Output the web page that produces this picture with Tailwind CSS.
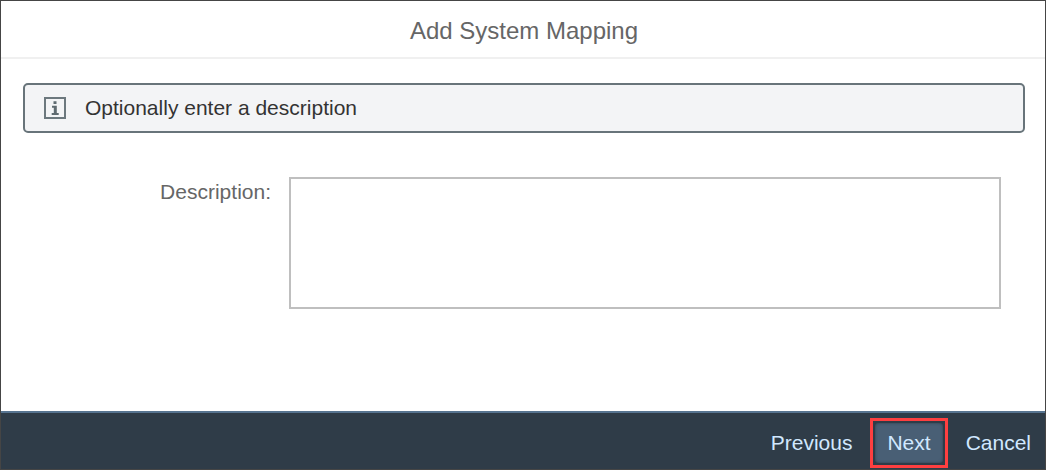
<!DOCTYPE html>
<html lang="en">
<head>
<meta charset="utf-8">
<meta name="viewport" content="width=device-width, initial-scale=1">
<title>Add System Mapping</title>
<script src="https://cdn.jsdelivr.net/npm/@tailwindcss/browser@4"></script>
</head>
<body class="flex min-h-screen flex-col border border-[#454545] bg-white font-['Liberation_Sans',Arial,sans-serif] text-[21px] leading-6 text-[#666666]">
  <header class="border-b-2 border-[#f0f0f0] pt-[14px] pb-[10px] pl-[2px] text-center">
    <h1 class="text-[24px] leading-8">Add System Mapping</h1>
  </header>
  <main class="flex grow flex-col pt-6 pr-5 pb-10 pl-[22px]">
    <div role="note" class="flex items-center gap-[19px] rounded-[5px] border-2 border-[#68747a] bg-[#f3f4f6] px-[19px] py-[11px] text-[#333333]">
      <svg class="size-[22px] shrink-0" viewBox="0 0 22 22" fill="none" aria-hidden="true">
        <rect x="1" y="1" width="20" height="20" stroke="#6c787e" stroke-width="2"/>
        <path d="M9.500 4.300h3v2.600h-3zM8 8.800h4.800v7.200h1.900v2H7.700v-2h2.100v-5.300H8z" fill="#5f6b71"/>
      </svg>
      <p>Optionally enter a description</p>
    </div>
    <div class="mt-11 mr-6 flex items-start">
      <label for="description" class="w-[248px] shrink-0 pt-[3px] text-right">Description:</label>
      <textarea id="description" class="ml-[18px] h-[132px] min-w-0 grow resize-none border-2 border-[#bfbfbf] bg-white px-3 py-2 text-[#333333] outline-none"></textarea>
    </div>
  </main>
  <footer class="flex items-center justify-end border-t-2 border-[#577490] bg-[#2f3c48] pt-[5px] pr-[14px] pb-px text-[#d1e8ff]">
    <button type="button" class="mr-[18px]">Previous</button>
    <div class="mr-[18px] border-3 border-[#ff3f40] p-[2px]">
      <button type="button" class="rounded-[4px] bg-[#495f75] px-3 py-2 shadow-[inset_0_0_3px_#2f3c48]">Next</button>
    </div>
    <button type="button">Cancel</button>
  </footer>
</body>
</html>
